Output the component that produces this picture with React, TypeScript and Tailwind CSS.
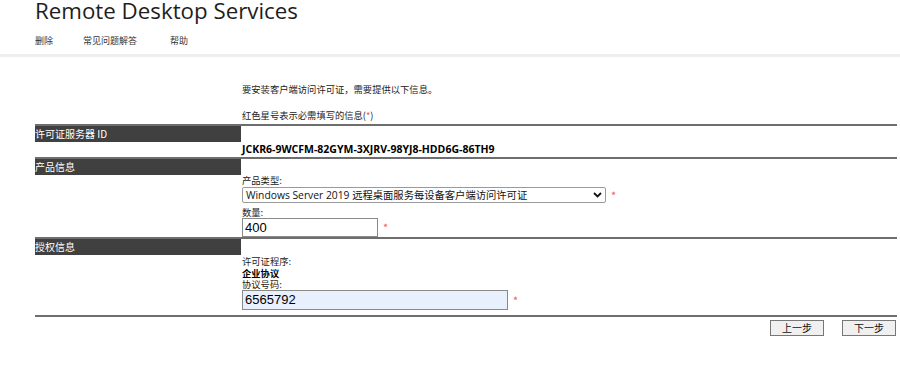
import React from "react";

const cjk = { fontFamily: '"Noto Sans CJK SC", "Noto Sans", sans-serif' };
const segoe = { fontFamily: '"Open Sans", "Noto Sans CJK SC", sans-serif' };
const arial = { fontFamily: '"Liberation Sans", Arial, sans-serif' };

function HeaderRow({ label }: { label: string }) {
  return (
    <div className="grid grid-cols-[206px_1fr] border-t-2 border-[#6e6e6e]">
      <div className="bg-[#404040] text-white text-[10px] leading-[16px] h-[16px]" style={cjk}>
        {label}
      </div>
      <div />
    </div>
  );
}

function Star() {
  return <span className="text-[#f05a5a] text-[11px] leading-[11px] ml-[5px]">*</span>;
}

export default function App() {
  return (
    <div className="w-[900px] h-[367px] bg-white text-[#222] overflow-hidden" style={cjk}>
      <div className="pl-[35px]">
        <div className="text-[22.3px] leading-[21px] text-[#1e1e1e]" style={segoe}>
          Remote Desktop Services
        </div>
        <div className="flex text-[9px] leading-[12px] mt-[14px] text-[#333]" style={cjk}>
          <span className="w-[48px]">删除</span>
          <span className="w-[87px]">常见问题解答</span>
          <span>帮助</span>
        </div>
      </div>
      <div className="h-[3px] bg-[#eeeeee] mt-[7px]" />
      <div className="ml-[35px] w-[862px] mt-[26px] text-[9.3px] text-[#222]">
        <div className="pl-[207px] leading-[12px]">要安装客户端访问许可证，需要提供以下信息。</div>
        <div className="pl-[207px] leading-[12px] mt-[14px]">
          红色星号表示必需填写的信息(<span className="text-[#f05a5a]">*</span>)
        </div>
        <div className="mt-[3px]">
          <HeaderRow label="许可证服务器 ID" />
          <div className="pl-[207px] h-[15px] text-[10.5px] font-bold leading-[15px] text-black" style={segoe}>
            JCKR6-9WCFM-82GYM-3XJRV-98YJ8-HDD6G-86TH9
          </div>
          <HeaderRow label="产品信息" />
          <div className="pl-[207px]">
            <div className="leading-[11px]">产品类型:</div>
            <div className="flex items-center mt-[1px]">
              <div className="w-[364px] h-[16px] border border-[#9a9a9a] rounded-[2px] flex items-center justify-between px-[3px] text-[10.3px] text-[#111]" style={segoe}>
                <span className="leading-[14px]">Windows Server 2019 远程桌面服务每设备客户端访问许可证</span>
                <svg width="9" height="6" viewBox="0 0 9 6">
                  <path d="M1 1 L4.5 4.5 L8 1" stroke="#111" strokeWidth="1.8" fill="none" />
                </svg>
              </div>
              <Star />
            </div>
            <div className="leading-[12px] mt-[3px]">数量:</div>
            <div className="flex items-center">
              <div className="w-[136px] h-[19px] border border-[#8a8a8a] px-[2px] text-[13px] leading-[17px] text-black" style={arial}>
                400
              </div>
              <Star />
            </div>
          </div>
          <HeaderRow label="授权信息" />
          <div className="pl-[207px]">
            <div className="leading-[12px]">许可证程序:</div>
            <div className="leading-[12px] font-bold text-black">企业协议</div>
            <div className="leading-[11px]">协议号码:</div>
            <div className="flex items-center">
              <div className="w-[266px] h-[20px] border border-[#8a8a8a] bg-[#e8f0fe] px-[2px] text-[13px] leading-[18px] text-black" style={arial}>
                6565792
              </div>
              <Star />
            </div>
          </div>
          <div className="border-t-2 border-[#6e6e6e] mt-[5px]" />
          <div className="flex justify-end gap-[18px] mt-[3px] pr-[1px]">
            <button className="w-[54px] h-[16px] border border-[#777] bg-[#f0f0f0] text-[10px] leading-[14px] text-[#111]">上一步</button>
            <button className="w-[54px] h-[16px] border border-[#777] bg-[#f0f0f0] text-[10px] leading-[14px] text-[#111]">下一步</button>
          </div>
        </div>
      </div>
    </div>
  );
}
